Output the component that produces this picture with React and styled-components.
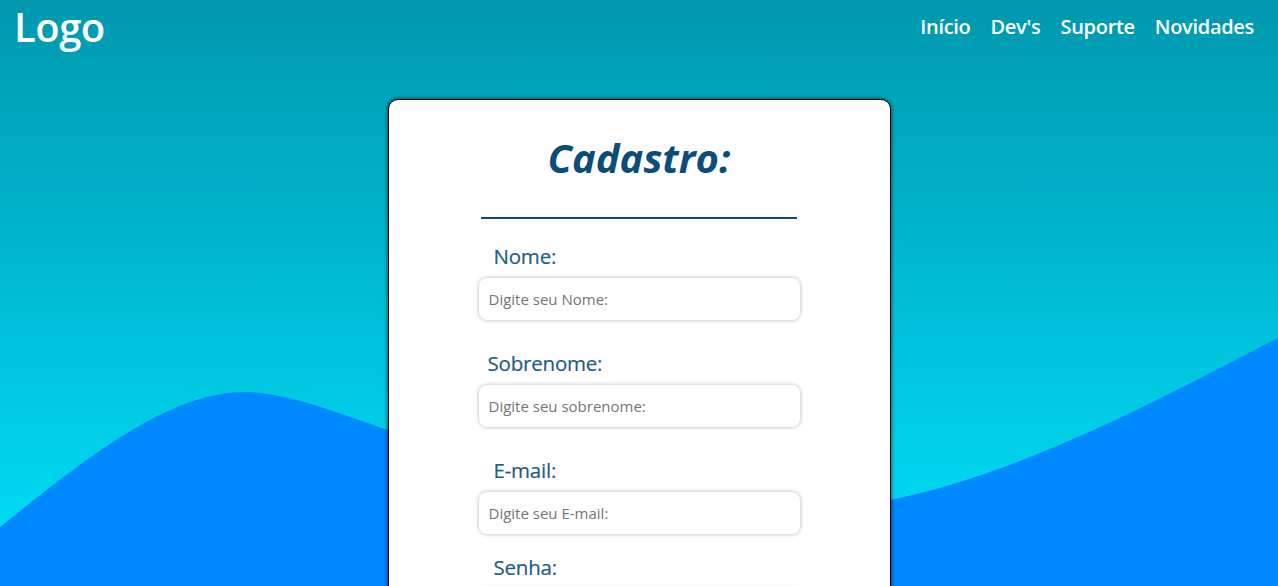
import React from 'react';
import styled, { createGlobalStyle } from 'styled-components';

const GlobalStyle = createGlobalStyle`
  * { box-sizing: border-box; }
  html, body { margin: 0; padding: 0; }
  body {
    font-family: 'Open Sans', 'Noto Sans', sans-serif;
    overflow: hidden;
  }
`;

const Page = styled.div`
  position: relative;
  min-height: 100vh;
  height: 586px;
  overflow: hidden;
  background: linear-gradient(to bottom, #0098ae 0%, #00e1fb 100%);
`;

const Wave = styled.svg`
  position: absolute;
  left: 0;
  top: 0;
  width: 100%;
  height: 100%;
  z-index: 0;
`;

const Header = styled.header`
  position: relative;
  z-index: 1;
  display: flex;
  justify-content: space-between;
  align-items: flex-start;
  padding: 0 24px 0 14px;
`;

const Logo = styled.h1`
  margin: 0;
  color: #fff;
  font-size: 40px;
  font-weight: 600;
  line-height: 54px;
  letter-spacing: -0.5px;
`;

const Nav = styled.nav`
  display: flex;
  gap: 20px;
  padding-top: 12px;
`;

const NavLink = styled.a`
  color: #fff;
  font-size: 20px;
  font-weight: 600;
  line-height: 30px;
  text-decoration: none;
  letter-spacing: -0.3px;
`;

const Main = styled.main`
  position: relative;
  z-index: 1;
  display: flex;
  justify-content: center;
  padding-top: 45px;
`;

const Card = styled.section`
  width: 503px;
  min-height: 600px;
  background: #fff;
  border: 1px solid #000;
  border-radius: 10px;
  box-shadow: 0 0 4px rgba(0, 0, 0, 0.7);
  display: flex;
  flex-direction: column;
  align-items: center;
  padding-top: 30px;
`;

const Title = styled.h2`
  margin: 0;
  color: #0b4d78;
  font-size: 40px;
  font-style: italic;
  font-weight: 700;
  line-height: 56px;
`;

const Divider = styled.div`
  width: 316px;
  height: 2px;
  background: #0b4d78;
  margin-top: 31px;
  margin-bottom: 23px;
`;

const Form = styled.form`
  width: 321px;
  display: flex;
  flex-direction: column;
`;

const Field = styled.div`
  display: flex;
  flex-direction: column;
  margin-bottom: ${(p) => p.$gap || 29}px;
`;

const Label = styled.label`
  color: #225d84;
  font-size: 20.5px;
  font-weight: 500;
  line-height: 28px;
  padding-left: ${(p) => p.$indent || 15}px;
  margin-bottom: 8px;
  letter-spacing: -0.2px;
  -webkit-text-stroke: 0.2px #225d84;
`;

const Input = styled.input`
  width: 100%;
  height: 42px;
  border: none;
  border-radius: 8px;
  box-shadow: 0 0 4px rgba(0, 0, 0, 0.3);
  padding: 0 10px;
  font-family: 'Open Sans', 'Noto Sans', sans-serif;
  font-size: 15px;
  color: #333;
  background: #fff;
  outline: none;

  &::placeholder {
    color: #757575;
  }
`;

const fields = [
  { label: 'Nome:', placeholder: 'Digite seu Nome:', indent: 15 },
  { label: 'Sobrenome:', placeholder: 'Digite seu sobrenome:', indent: 9 },
  { label: 'E-mail:', placeholder: 'Digite seu E-mail:', indent: 15, gap: 19 },
  { label: 'Senha:', placeholder: 'Digite sua Senha:', indent: 15, type: 'password' },
];

export default function App() {
  return (
    <>
      <GlobalStyle />
      <Page>
        <Wave viewBox="0 0 1278 586" preserveAspectRatio="none">
          <path
            fill="#0088ff"
            d="M0,527 C90,455 170,392 245,392 C340,392 520,512 780,512 C950,512 1120,420 1278,338 L1278,586 L0,586 Z"
          />
        </Wave>
        <Header>
          <Logo>Logo</Logo>
          <Nav>
            <NavLink href="#">Início</NavLink>
            <NavLink href="#">Dev's</NavLink>
            <NavLink href="#">Suporte</NavLink>
            <NavLink href="#">Novidades</NavLink>
          </Nav>
        </Header>
        <Main>
          <Card>
            <Title>Cadastro:</Title>
            <Divider />
            <Form>
              {fields.map((f) => (
                <Field key={f.label} $gap={f.gap}>
                  <Label $indent={f.indent}>{f.label}</Label>
                  <Input type={f.type || 'text'} placeholder={f.placeholder} />
                </Field>
              ))}
            </Form>
          </Card>
        </Main>
      </Page>
    </>
  );
}
